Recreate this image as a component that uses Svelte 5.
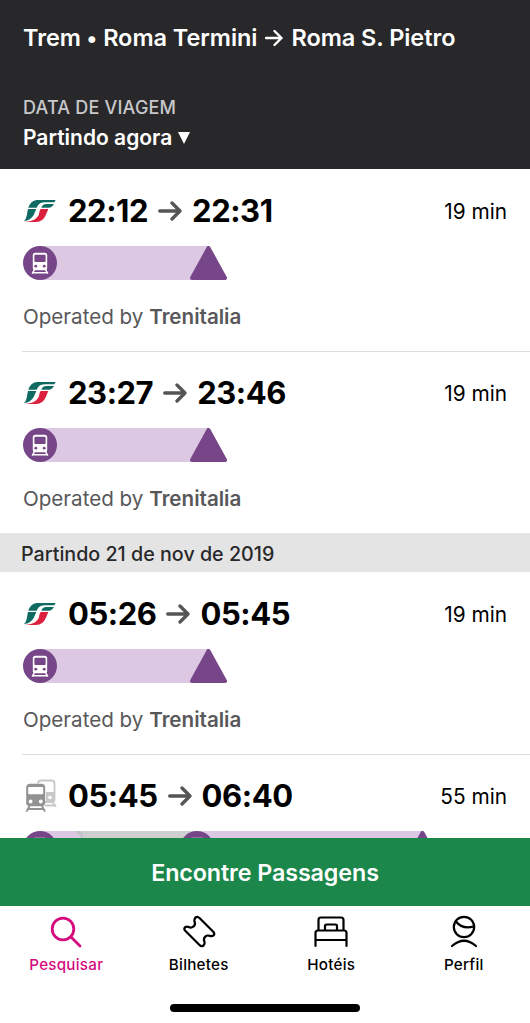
<script>
	/* Data */
	const today = [
		{ from: '22:12', to: '22:31', duration: '19 min', operator: 'Trenitalia' },
		{ from: '23:27', to: '23:46', duration: '19 min', operator: 'Trenitalia' }
	]
	const tomorrow = [
		{ from: '05:26', to: '05:45', duration: '19 min', operator: 'Trenitalia' },
		{ from: '05:45', to: '06:40', duration: '55 min', change: true }
	]
	const tabs = [
		{ id: 'search', label: 'Pesquisar' },
		{ id: 'tickets', label: 'Bilhetes' },
		{ id: 'hotels', label: 'Hotéis' },
		{ id: 'profile', label: 'Perfil' }
	]

	let active = $state('search')
</script>

{#snippet stop()}
	<svg class="stop" viewBox="0 0 34 34">
		<circle cx="17" cy="17" r="17" fill="#764689" />
		<path d="M11.5 23.5 9.2 27.6M22.5 23.5 24.8 27.6M10 26.8H24" stroke="#fff" stroke-width="1.5" />
		<rect x="9.8" y="6.7" width="14.4" height="17.6" rx="2.6" fill="#fff" />
		<rect x="11.4" y="8.8" width="11.2" height="7.2" rx="1" fill="#764689" />
		<circle cx="12.8" cy="20.2" r="1.4" fill="#764689" />
		<circle cx="21.2" cy="20.2" r="1.4" fill="#764689" />
	</svg>
{/snippet}

{#snippet trip(item)}
	<article>
		<div class="row">
			{#if item.change}
				<svg class="trains" viewBox="0 0 34 34">
					<g fill="none" stroke="#c8c8c8">
						<path d="M13 4.5Q13 1.5 16 1.5H26.5Q29.5 1.5 29.5 4.5V20Q29.5 23 26.5 23H20" stroke-width="1.8" />
						<path d="M21 13H29V22.5H21Z" fill="#c8c8c8" stroke="none" />
						<path d="M27.5 23 31 27.8M20 26.5H30" stroke-width="1.8" />
					</g>
					<circle cx="25" cy="18.5" r="1.7" fill="#fff" />
					<path d="M4.5 27 1.5 32.6M17 27 20 32.6M3.5 30H18" stroke="#929292" stroke-width="1.9" />
					<rect x="1.2" y="4.8" width="19" height="22.5" rx="3.8" fill="#929292" />
					<rect x="3.2" y="8" width="15" height="7.3" rx="1" fill="#fff" />
					<circle cx="5.6" cy="22.5" r="1.9" fill="#fff" />
					<circle cx="15.8" cy="22.5" r="1.9" fill="#fff" />
				</svg>
			{:else}
				<svg class="logo" viewBox="0 0 96 66">
					<path d="M38 0H95L91 7H62Q48 7 42 16L38 23H13Q20 2 38 0Z" fill="#0f6b62" />
					<path d="M12 27H37L29 45Q20 62 0 63Q6 58 8 48Q10 36 12 27Z" fill="#0f6b62" />
					<path d="M66 12H90Q84 23 74 23H52Q56 12 66 12Z" fill="#0f6b62" />
					<path d="M50 27H73L65 46Q57 66 36 66H2Q28 63 35 56Q44 50 45 42Q46 32 50 27Z" fill="#dc1f3c" />
				</svg>
			{/if}
			<strong class="time">{item.from}</strong>
			<svg class="arrow" viewBox="0 0 24 20">
				<path d="M1.7 10H22M14 2 22 10 14 18" />
			</svg>
			<strong class="time">{item.to}</strong>
			<span class="duration">{item.duration}</span>
		</div>

		<div class="route" class:long={item.change}>
			{@render stop()}
			<div class="leg"></div>
			{#if item.change}
				<div class="wait"></div>
				{@render stop()}
				<div class="leg second"></div>
			{/if}
			<svg class="end" viewBox="0 0 37 34">
				<path d="M18.5 2 35 32H2Z" fill="#764689" stroke="#764689" stroke-width="4" stroke-linejoin="round" />
			</svg>
		</div>

		{#if item.operator}
			<p>Operated by <b>{item.operator}</b></p>
		{/if}
	</article>
{/snippet}

<div class="screen">
	<header>
		<h1>
			<span>Trem <i>•</i> Roma Termini</span>
			<svg viewBox="0 0 18 18"><path d="M1 9H16.5M9.5 2 16.5 9 9.5 16" /></svg>
			<span>Roma S. Pietro</span>
		</h1>
		<span class="label">DATA DE VIAGEM</span>
		<div class="date">
			<span>Partindo agora</span>
			<svg viewBox="0 0 12 12"><path d="M0 0H12L6 12Z" fill="#fff" /></svg>
		</div>
	</header>

	<main>
		{#each today as item}
			{@render trip(item)}
		{/each}
		<h2>Partindo 21 de nov de 2019</h2>
		{#each tomorrow as item}
			{@render trip(item)}
		{/each}
	</main>

	<button class="find">Encontre Passagens</button>

	<nav>
		{#each tabs as tab}
			<button class="tab" class:active={active === tab.id} onclick={() => (active = tab.id)}>
				<svg viewBox="0 0 34 34">
					{#if tab.id === 'search'}
						<circle cx="14" cy="14" r="10.8" stroke-width="2.8" />
						<path d="M22 22 31 31" stroke-width="2.8" />
					{:else if tab.id === 'tickets'}
						<path d="M13.5 2.5Q15.5 1 17.5 3L31.5 17Q33 19 31.5 20.5C28.5 22.5 27.5 19.5 24.5 20.8C21.5 22.3 21.5 24.5 22.5 27Q23 28.5 21.5 30.5Q19.5 32 17.5 30L3 15.5Q1.5 13.5 3.5 12C6 10.5 7 13.5 10 12.3C13 11 13.5 9 12.5 6.5Q12 4.5 13.5 2.5Z" />
					{:else if tab.id === 'hotels'}
						<path d="M4.5 15V5Q4.5 2.5 7 2.5H27Q29.5 2.5 29.5 5V15" />
						<path d="M1.5 31V18Q1.5 15.5 4 15.5H30Q32.5 15.5 32.5 18V31M1.5 25H32.5M11 15.5V11Q11 9.5 12.5 9.5H21.5Q23 9.5 23 11V15.5" />
					{:else}
						<circle cx="17" cy="12" r="10.2" />
						<path d="M9 6.5Q15 14.5 26.8 11.5M5 31Q17 20.5 29 31" />
					{/if}
				</svg>
				<span>{tab.label}</span>
			</button>
		{/each}
	</nav>
	<div class="home"></div>
</div>

<style>
	:global(body) {
		background: #fff;
	}

	.screen {
		height: 1023px;
		display: flex;
		flex-direction: column;
		overflow: hidden;
		font-family: Inter, 'Liberation Sans', sans-serif;
		color: #000;
	}

	header {
		box-sizing: border-box;
		height: 169px;
		flex: none;
		padding: 22px 23px 0;
		background: #28282a;
		color: #fff;
	}

	h1 {
		display: flex;
		align-items: center;
		gap: 8px;
		height: 32px;
		margin: 0 0 42px;
		font-size: 23.5px;
		line-height: 32px;
		font-weight: 600;
		letter-spacing: -0.05px;
		white-space: nowrap;
	}

	h1 i {
		margin-left: -0.5px;
		font-size: 22px;
		line-height: 20px;
		font-style: normal;
	}

	h1 svg {
		width: 18px;
		height: 18px;
		fill: none;
		stroke: #fff;
		stroke-width: 2.4;
		stroke-linecap: round;
		stroke-linejoin: round;
	}

	.label {
		display: block;
		font-size: 18px;
		line-height: 24px;
		font-weight: 500;
		letter-spacing: 0.2px;
		color: #c9c9cc;
	}

	.date {
		display: flex;
		align-items: center;
		gap: 6px;
		margin-top: 4px;
		font-size: 21px;
		line-height: 28px;
		font-weight: 600;
	}

	.date svg {
		width: 12px;
		height: 12px;
	}

	main {
		flex: 1;
		min-height: 0;
		overflow: hidden;
	}

	article {
		box-sizing: border-box;
		height: 182px;
		margin-left: 22px;
		padding: 22px 23px 0 1px;
	}

	article + article {
		border-top: 1px solid #dedede;
		padding-top: 21px;
	}

	.row {
		display: flex;
		align-items: center;
		height: 40px;
	}

	.logo {
		width: 32px;
		height: 22px;
		margin: 0 12px 0 1px;
	}

	.trains {
		width: 34px;
		height: 34px;
		margin: 0 9px 0 2px;
	}

	.time {
		font-size: 31px;
		line-height: 38px;
		font-weight: 700;
		letter-spacing: -0.45px;
	}

	.arrow {
		width: 24px;
		height: 20px;
		margin: 0 10px;
		fill: none;
		stroke: #555;
		stroke-width: 3.3;
		stroke-linecap: round;
		stroke-linejoin: round;
	}

	.duration {
		margin-left: auto;
		font-size: 20.8px;
	}

	.route {
		display: flex;
		width: 204px;
		height: 34px;
		margin: 15px 0 0 -0.5px;
	}

	.route.long {
		width: 418px;
	}

	.stop {
		flex: none;
		width: 34px;
		height: 34px;
		background: linear-gradient(90deg, transparent 50%, #ddc8e4 50%);
	}

	.wait + .stop {
		background: linear-gradient(90deg, #cfcfcf 50%, #ddc8e4 50%);
	}

	.leg {
		flex: 1;
		background: #ddc8e4;
	}

	.long .leg:not(.second) {
		flex: none;
		width: 26px;
		background: linear-gradient(45deg, #ddc8e4 85%, #c2bfc4 89%, #cfcfcf 100%);
	}

	.wait {
		width: 97px;
		background: #cfcfcf;
	}

	.end {
		flex: none;
		width: 37px;
		height: 34px;
		background: linear-gradient(90deg, #ddc8e4 50%, transparent 50%);
	}

	p {
		margin: 22px 0 0;
		font-size: 20.6px;
		line-height: 29px;
		color: #58585a;
	}

	b {
		font-weight: 600;
	}

	h2 {
		height: 39px;
		margin: 0;
		padding-left: 21px;
		background: #e4e4e4;
		font-size: 19.7px;
		line-height: 42px;
		font-weight: 500;
		color: #28282a;
	}

	button {
		border: 0;
		padding: 0;
		font-family: inherit;
	}

	.find {
		flex: none;
		height: 68px;
		padding-top: 1px;
		background: #1b874b;
		color: #fff;
		font-size: 23.3px;
		font-weight: 600;
		letter-spacing: -0.1px;
	}

	nav {
		display: flex;
		height: 98px;
		flex: none;
	}

	.tab {
		flex: 1;
		display: flex;
		flex-direction: column;
		align-items: center;
		padding-top: 9px;
		background: none;
		color: #000;
		font-size: 15.2px;
		font-weight: 500;
		letter-spacing: 0.25px;
	}

	.tab svg {
		width: 34px;
		height: 34px;
		margin-bottom: 6px;
		fill: none;
		stroke: currentColor;
		stroke-width: 2.2;
		stroke-linecap: round;
		stroke-linejoin: round;
	}

	.tab.active {
		color: #d60b7d;
	}

	.home {
		flex: none;
		width: 190px;
		height: 8px;
		margin: 0 auto 11px;
		border-radius: 4px;
		background: #000;
	}
</style>
